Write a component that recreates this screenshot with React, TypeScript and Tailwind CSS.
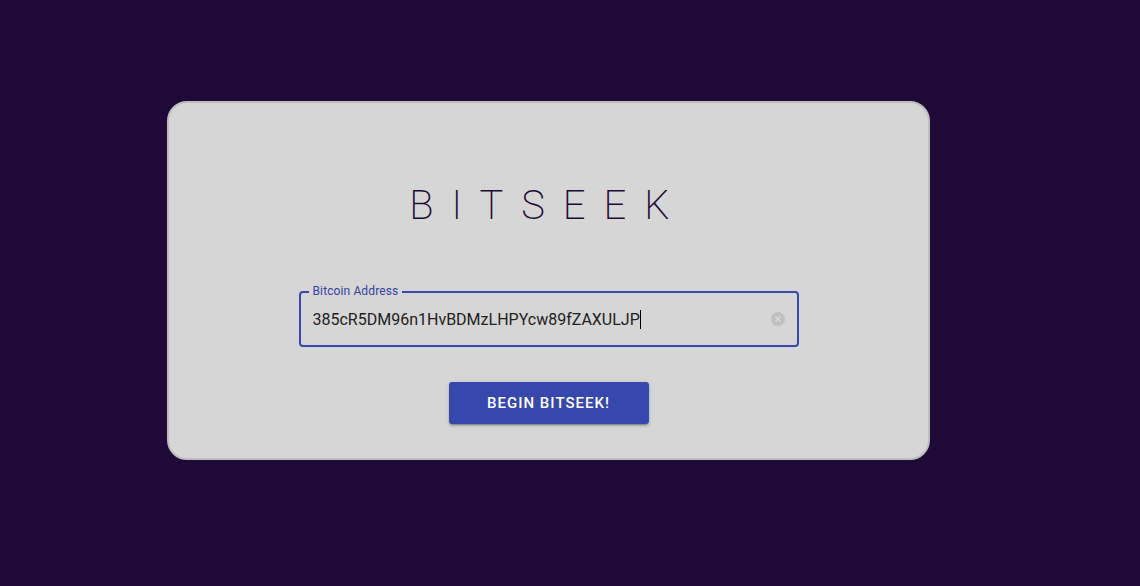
import { useState } from "react";

function ClearIcon() {
  return (
    <svg viewBox="0 0 14 14" className="size-3.5" aria-hidden="true">
      <circle cx="7" cy="7" r="7" fill="#bfbfbf" />
      <path d="M4.4 4.4l5.2 5.2M9.6 4.4l-5.2 5.2" stroke="#d6d6d6" strokeWidth="1.8" />
    </svg>
  );
}

function AddressField() {
  const [address, setAddress] = useState("385cR5DM96n1HvBDMzLHPYcw89fZAXULJP");
  return (
    <div className="relative flex h-14 w-full max-w-[500px] items-center rounded border-2 border-[#3648ae] px-3">
      <label
        htmlFor="address"
        className="absolute -top-[10px] left-2 bg-[#d6d6d6] px-1 text-xs leading-4 tracking-[0.01em] text-[#3542a0]"
      >
        Bitcoin Address
      </label>
      <input
        id="address"
        type="text"
        value={address}
        onChange={(e) => setAddress(e.target.value)}
        className="min-w-0 [field-sizing:content] bg-transparent pt-0.5 text-base text-[#212121] caret-transparent outline-none"
      />
      <span className="h-[19px] w-px bg-black" />
      <button
        type="button"
        aria-label="Clear address"
        onClick={() => setAddress("")}
        className="ml-auto shrink-0"
      >
        <ClearIcon />
      </button>
    </div>
  );
}

export default function App() {
  return (
    <main className="flex min-h-screen justify-center bg-[#1f0a37] pt-[101px] pr-[43px] pb-20 font-['Roboto',sans-serif]">
      <form
        onSubmit={(e) => e.preventDefault()}
        className="flex w-full max-w-[763px] flex-col items-center self-start rounded-[20px] border-2 border-[#bdbdbd] bg-[#d6d6d6] px-6 pt-[79px] pb-[34px]"
      >
        <h1 className="text-[40px] leading-12 font-extralight tracking-[18px] text-[#1f0a37]">BITSEEK</h1>
        <div className="mt-[61px] flex w-full justify-center">
          <AddressField />
        </div>
        <button
          type="submit"
          className="mt-[35px] h-[42px] w-[200px] rounded-[3px] bg-[#3648ae] text-[15px] font-medium tracking-[1px] text-white shadow-[0_3px_1px_-2px_rgba(0,0,0,0.2),0_2px_2px_0_rgba(0,0,0,0.14),0_1px_5px_0_rgba(0,0,0,0.12)]"
        >
          BEGIN BITSEEK!
        </button>
      </form>
    </main>
  );
}
